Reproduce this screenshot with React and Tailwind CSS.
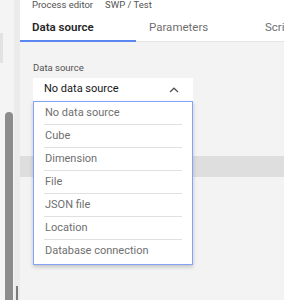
const OPTIONS = [
  'No data source',
  'Cube',
  'Dimension',
  'File',
  'JSON file',
  'Location',
  'Database connection',
]

export default function App() {
  return (
    <div
      className="relative flex h-[300px] w-[284px] overflow-hidden bg-[#f3f3f3]"
      style={{ fontFamily: 'Roboto, "Noto Sans", sans-serif' }}
    >
      {/* Left rail with scrollbar */}
      <div className="flex w-[20px] shrink-0 bg-[#f4f4f4]">
        <div className="w-[4px] pt-[33px]">
          <div className="h-[30px] w-[3px] bg-[#e2e2e2]" />
        </div>
        <div className="flex w-[10px] flex-col pt-[112px]">
          <div className="ml-[1px] w-[8px] flex-1 rounded-t-[4px] bg-[#8c8c8c]" />
        </div>
        <div className="flex w-[6px] flex-col justify-end bg-[#ebebeb]">
          <div className="ml-[2px] h-[14px] w-[2px] bg-[#7a7a7a]" />
        </div>
      </div>

      {/* Main */}
      <div className="flex flex-1 flex-col">
        <div className="bg-white">
          <div className="mt-[-2px] flex h-[13px] items-center gap-[12px] pl-[12px] text-[9.5px] leading-[13px] text-[#525252]">
            <span>Process editor</span>
            <span>SWP / Test</span>
          </div>
          <div className="flex h-[31px] text-[11.5px]">
            <div className="flex w-[116px] items-center border-b-2 border-[#5b86f2] pl-[12px] pt-[4px] font-semibold text-[#262626]">
              Data source
            </div>
            <div className="flex w-[116px] items-center border-b border-[#e6e6e6] pl-[13px] pt-[3px] text-[#6f6f6f]">
              Parameters
            </div>
            <div className="flex flex-1 items-center border-b border-[#e6e6e6] pl-[13px] pt-[3px] text-[#6f6f6f]">
              Scripts
            </div>
          </div>
        </div>

        <div className="flex flex-1 flex-col pt-[20px]">
          <div className="pl-[13px] text-[9.5px] leading-[12px] text-[#525252]">Data source</div>
          <div className="relative ml-[13px] mt-[4px] w-[160px]">
            <div className="flex h-[23px] items-center justify-between bg-white pl-[11px] pr-[14px] text-[11px] text-[#161616]">
              <span>No data source</span>
              <svg width="10" height="6" viewBox="0 0 10 6" fill="none">
                <path d="M1 5L5 1.2L9 5" stroke="#525252" strokeWidth="1.2" />
              </svg>
            </div>
            <div className="absolute left-0 top-full z-10 w-[160px] border border-[#85a3f5] bg-white pb-[1px] shadow-[0_2px_4px_rgba(0,0,0,0.2)]">
              {OPTIONS.map((o, i) => (
                <div key={o} className="px-[10px]">
                  <div
                    className={`flex h-[23px] items-center pl-[1px] text-[11px] text-[#6f6f6f] ${
                      i < OPTIONS.length - 1 ? 'border-b border-[#e0e0e0]' : ''
                    }`}
                  >
                    {o}
                  </div>
                </div>
              ))}
            </div>
          </div>
          <div className="mt-[55px] h-[21px] bg-[#dedede]" />
        </div>
      </div>
    </div>
  )
}
